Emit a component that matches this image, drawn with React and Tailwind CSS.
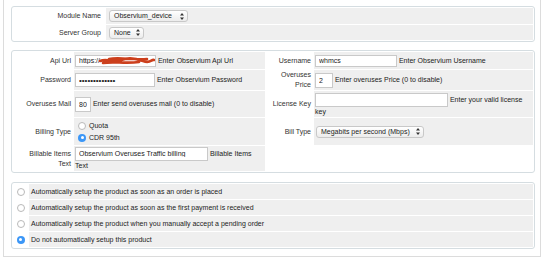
import React from 'react';

function Label({ children, className = '' }) {
  return (
    <td className={`bg-white text-right align-middle pr-[2px] leading-[10px] text-[#333] ${className}`}>
      {children}
    </td>
  );
}

function Field({ children, className = '' }) {
  return (
    <td className={`bg-[#efefef] align-middle pl-[1px] leading-[10px] text-[#222] ${className}`}>
      {children}
    </td>
  );
}

function TextInput({ value, className = '' }) {
  return (
    <input
      type="text"
      readOnly
      value={value}
      className={`border border-[#c9c9c9] bg-white px-[3px] text-[#222] outline-none align-middle ${className}`}
    />
  );
}

function FakeSelect({ value, className = '' }) {
  return (
    <span
      className={`inline-flex items-center justify-between rounded-[3px] border border-[#c8c8c8] bg-linear-to-b from-white to-[#ececec] pl-[4px] pr-[3px] align-middle text-[#222] ${className}`}
    >
      <span>{value}</span>
      <svg width="4" height="7" viewBox="0 0 4 7">
        <path d="M2 0L4 2.6H0Z M2 7L0 4.4H4Z" fill="#333" />
      </svg>
    </span>
  );
}

function Radio({ checked }) {
  if (checked) {
    return (
      <span className="inline-flex h-[8px] w-[8px] items-center justify-center rounded-full bg-[#3c97f7] align-middle">
        <span className="h-[3px] w-[3px] rounded-full bg-white" />
      </span>
    );
  }
  return <span className="inline-block h-[8px] w-[8px] rounded-full border border-[#b9b9b9] bg-white align-middle" />;
}

function Panel({ children, className = '' }) {
  return (
    <table
      className={`w-[524px] table-fixed border-separate border-spacing-[1px] rounded-[3px] border border-[#d5dde1] ${className}`}
    >
      <tbody>{children}</tbody>
    </table>
  );
}

const setupOptions = [
  'Automatically setup the product as soon as an order is placed',
  'Automatically setup the product as soon as the first payment is received',
  'Automatically setup the product when you manually accept a pending order',
  'Do not automatically setup this product',
];

export default function App() {
  return (
    <div className="bg-white h-[262px] font-['Liberation_Sans',Arial,sans-serif] text-[7px]">
      <div className="ml-[3px] w-[538px] border-x border-b border-[#dcdcdc] pt-[6px] pl-[7px] pb-[7px]">
        {/* module settings */}
        <Panel>
          <tr className="h-[16px]">
            <Label className="w-[92px] pr-[4px]">Module Name</Label>
            <Field className="pl-[3px]">
              <FakeSelect value="Observium_device" className="h-[12px] w-[79px]" />
            </Field>
          </tr>
          <tr className="h-[15px]">
            <Label className="pr-[4px]">Server Group</Label>
            <Field className="pl-[3px]">
              <FakeSelect value="None" className="h-[12px] w-[35px]" />
            </Field>
          </tr>
        </Panel>

        {/* observium config */}
        <Panel className="mt-[8px]">
          <tr className="h-[17px]">
            <Label className="w-[60px]">Api Url</Label>
            <Field className="w-[191px]">
              <span className="relative inline-block align-middle">
                <TextInput value="https://" className="h-[12px] w-[81px] text-[7px]" />
                <svg className="absolute left-[24px] top-[1px]" width="56" height="10" viewBox="0 0 56 10">
                  <path
                    d="M1 5 C 8 2, 14 7, 22 4 S 36 2, 44 5 S 52 3, 55 4 M4 7 C 14 5, 26 8, 40 6 M10 3 C 20 1, 32 4, 48 3"
                    stroke="#cc3f1c"
                    strokeWidth="2.6"
                    fill="none"
                    strokeLinecap="round"
                  />
                </svg>
              </span>{' '}
              Enter Observium Api Url
            </Field>
            <Label className="w-[47px]">Username</Label>
            <Field>
              <TextInput value="whmcs" className="h-[12px] w-[82px] text-[7px]" /> Enter Observium Username
            </Field>
          </tr>
          <tr className="h-[20px]">
            <Label>Password</Label>
            <Field>
              <TextInput value="•••••••••••••" className="h-[14px] w-[80px] text-[8px] leading-[10px]" /> Enter Observium Password
            </Field>
            <Label>
              Overuses
              <br />
              Price
            </Label>
            <Field>
              <TextInput value="2" className="h-[15px] w-[18px] text-[7px]" /> Enter overuses Price (0 to disable)
            </Field>
          </tr>
          <tr className="h-[26px]">
            <Label>Overuses Mail</Label>
            <Field>
              <TextInput value="80" className="h-[15px] w-[16px] text-[7px]" /> Enter send overuses mail (0 to disable)
            </Field>
            <Label>License Key</Label>
            <Field className="pt-[1px]">
              <TextInput value="" className="h-[14px] w-[133px] text-[7px]" /> Enter your valid license
              <br />
              key
            </Field>
          </tr>
          <tr className="h-[27px]">
            <Label>Billing Type</Label>
            <Field className="pl-[4px]">
              <div className="flex flex-col gap-[2px]">
                <div className="flex items-center gap-[3px]">
                  <Radio />
                  <span>Quota</span>
                </div>
                <div className="flex items-center gap-[3px]">
                  <Radio checked />
                  <span>CDR 95th</span>
                </div>
              </div>
            </Field>
            <Label>Bill Type</Label>
            <Field className="pl-[2px]">
              <FakeSelect value="Megabits per second (Mbps)" className="h-[12px] w-[108px]" />
            </Field>
          </tr>
          <tr className="h-[25px]">
            <Label>
              Billable Items
              <br />
              Text
            </Label>
            <Field>
              <TextInput value="Observium Overuses Traffic billing" className="h-[14px] w-[133px] text-[7px]" /> Billable Items
              <br />
              Text
            </Field>
            <td className="bg-white" />
            <td className="bg-white" />
          </tr>
        </Panel>

        {/* auto setup */}
        <Panel className="mt-[9px]">
          {setupOptions.map((opt, i) => (
            <tr key={i} className="h-[15px]">
              <td className="w-[15px] bg-white text-center align-middle leading-[0]">
                <Radio checked={i === 3} />
              </td>
              <Field className="pl-[2px]">{opt}</Field>
            </tr>
          ))}
        </Panel>
      </div>
    </div>
  );
}
